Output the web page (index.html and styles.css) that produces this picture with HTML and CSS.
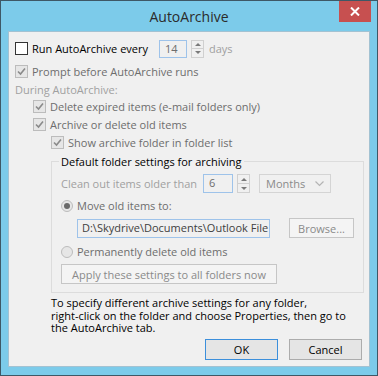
FILE: index.html
```html
<!DOCTYPE html>
<html lang="en">
<head>
    <meta charset="UTF-8">
    <title>AutoArchive</title>
    <link rel="stylesheet" href="styles.css">
</head>
<body>
    <div class="window">
        <div class="titlebar">
            <span class="title">AutoArchive</span>
            <span class="close">
                <svg width="10" height="9" viewBox="0 0 10 9"><path d="M1 0.5 L9 8.5 M9 0.5 L1 8.5" stroke="#fff" stroke-width="2"/></svg>
            </span>
        </div>
        <div class="client">
            <div class="row r1">
                <span class="check on"></span>
                <span class="label dark run-label">Run AutoArchive every</span>
                <span class="edit days-edit">14</span>
                <span class="arrows"><span class="up"></span><span class="down"></span></span>
                <span class="label faint days">days</span>
            </div>
            <div class="row r2">
                <span class="check"><svg width="11" height="11" viewBox="0 0 11 11"><path d="M2 5.5 L4.5 8 L9 2.5" fill="none" stroke="#8a8a8a" stroke-width="1.6"/></svg></span>
                <span class="label gray">Prompt before AutoArchive runs</span>
            </div>
            <div class="row r3">
                <span class="label faint">During AutoArchive:</span>
            </div>
            <div class="row r4 indent1">
                <span class="check"><svg width="11" height="11" viewBox="0 0 11 11"><path d="M2 5.5 L4.5 8 L9 2.5" fill="none" stroke="#8a8a8a" stroke-width="1.6"/></svg></span>
                <span class="label gray">Delete expired items (e-mail folders only)</span>
            </div>
            <div class="row r5 indent1">
                <span class="check"><svg width="11" height="11" viewBox="0 0 11 11"><path d="M2 5.5 L4.5 8 L9 2.5" fill="none" stroke="#8a8a8a" stroke-width="1.6"/></svg></span>
                <span class="label gray">Archive or delete old items</span>
            </div>
            <div class="row r6 indent2">
                <span class="check"><svg width="11" height="11" viewBox="0 0 11 11"><path d="M2 5.5 L4.5 8 L9 2.5" fill="none" stroke="#8a8a8a" stroke-width="1.6"/></svg></span>
                <span class="label gray">Show archive folder in folder list</span>
            </div>

            <fieldset class="group">
                <legend>Default folder settings for archiving</legend>
                <div class="row clean-row">
                    <span class="label faint clean-label">Clean out items older than</span>
                    <span class="edit months-edit">6</span>
                    <span class="arrows"><span class="up"></span><span class="down"></span></span>
                    <span class="combo">
                        <span>Months</span>
                        <svg width="9" height="6" viewBox="0 0 9 6"><path d="M0.5 0.5 L4.5 4.5 L8.5 0.5" fill="none" stroke="#b4b4b4" stroke-width="1.2"/></svg>
                    </span>
                </div>
                <div class="row move-row">
                    <span class="radio on"></span>
                    <span class="label gray">Move old items to:</span>
                </div>
                <div class="row path-row">
                    <span class="edit path-edit">D:\Skydrive\Documents\Outlook File</span>
                    <span class="btn browse">Browse...</span>
                </div>
                <div class="row perm-row">
                    <span class="radio"></span>
                    <span class="label gray">Permanently delete old items</span>
                </div>
                <div class="btn apply">Apply these settings to all folders now</div>
            </fieldset>

            <p class="help">To specify different archive settings for any folder, <span class="nobr">right-click</span> on the folder and choose Properties, then go to the AutoArchive tab.</p>

            <div class="buttons">
                <span class="btn push ok">OK</span>
                <span class="btn push">Cancel</span>
            </div>
        </div>
    </div>
</body>
</html>
```

FILE: styles.css
```css
* {
    box-sizing: border-box;
}
body {
    margin: 0;
    font-family: "Open Sans", "Noto Sans", sans-serif;
    font-size: 11px;
}
.window {
    width: 378px;
    height: 376px;
    border: 1px solid #3e5866;
    background-color: #7ccbea;
    padding: 0 7px 8px 7px;
    display: flex;
    flex-direction: column;
}
.titlebar {
    height: 30px;
    flex: none;
    display: grid;
    grid-template-columns: 1fr auto 1fr;
    align-items: start;
}
.title {
    grid-column: 2;
    font-size: 14px;
    line-height: 31px;
    color: #2b2b2b;
}
.close {
    grid-column: 3;
    justify-self: end;
    width: 32px;
    height: 21px;
    margin-right: -1px;
    background-color: #c75050;
    display: flex;
    align-items: center;
    justify-content: center;
}
.client {
    flex: 1;
    background-color: #f0f0f0;
    border: 1px solid #a3c2d2;
    padding: 7px 6px 0 6px;
}
.row {
    display: flex;
    align-items: center;
    height: 17px;
    white-space: nowrap;
}
.label {
    margin-left: 4px;
    line-height: 17px;
}
.r3 .label, .clean-label {
    margin-left: 0;
}
.dark {
    color: #000;
}
.gray {
    color: #6d6d6d;
}
.faint {
    color: #a0a0a0;
}
.r1 {
    height: 19px;
}
.run-label {
    width: 127px;
    flex: none;
}
.r2 {
    margin-top: 5px;
}
.r3 {
    margin-top: 1px;
}
.r5, .r6 {
    margin-top: 1px;
}
.indent1 {
    padding-left: 18px;
}
.indent2 {
    padding-left: 36px;
}

/* check boxes and radios */
.check {
    width: 13px;
    height: 13px;
    flex: none;
    border: 1px solid #bcbcbc;
    background-color: #e6e6e6;
    display: flex;
    align-items: center;
    justify-content: center;
}
.check.on {
    border-color: #333;
    background-color: #fff;
}
.radio {
    width: 12px;
    height: 12px;
    flex: none;
    border: 1px solid #bcbcbc;
    border-radius: 50%;
    background-color: #e6e6e6;
    display: flex;
    align-items: center;
    justify-content: center;
}
.radio.on::after {
    content: "";
    width: 6px;
    height: 6px;
    border-radius: 50%;
    background-color: #6a6a6a;
}

/* edits, spinners, combo */
.edit {
    height: 18px;
    border: 1px solid #9ec3ea;
    background-color: #f0f0f0;
    color: #6d6d6d;
    padding: 0 5px;
    line-height: 16px;
    overflow: hidden;
    flex: none;
}
.days-edit {
    width: 28px;
}
.arrows {
    width: 13px;
    height: 18px;
    margin-left: 4px;
    display: flex;
    flex-direction: column;
    flex: none;
}
.arrows span {
    flex: 1;
    border: 1px solid #d0d0d0;
    background-color: #f0f0f0;
    display: flex;
    align-items: center;
    justify-content: center;
}
.arrows .down {
    border-top: none;
}
.arrows .up::after {
    content: "";
    border-left: 3px solid transparent;
    border-right: 3px solid transparent;
    border-bottom: 3px solid #7a7a7a;
}
.arrows .down::after {
    content: "";
    border-left: 3px solid transparent;
    border-right: 3px solid transparent;
    border-top: 3px solid #7a7a7a;
}
.days {
    margin-left: 5px;
}

/* group box */
.group {
    margin: 2px -1px 0 36px;
    border: 1px solid #dcdcdc;
    padding: 0 9px 8px 9px;
    min-width: 0;
}
.group legend {
    padding: 0 2px;
    margin-left: -2px;
    line-height: 17px;
    color: #000;
}
.clean-row {
    height: 19px;
    margin-top: 4px;
}
.clean-label {
    width: 142px;
    flex: none;
}
.months-edit {
    width: 30px;
    height: 19px;
}
.clean-row .arrows {
    height: 19px;
}
.combo {
    margin-left: 9px;
    width: 72px;
    height: 19px;
    border: 1px solid #d4d4d4;
    background-color: #f0f0f0;
    color: #8a8a8a;
    padding: 0 6px 0 6px;
    display: flex;
    align-items: center;
    justify-content: space-between;
}
.move-row {
    margin-top: 4px;
}
.path-row {
    height: 20px;
    margin-top: 4px;
    padding-left: 16px;
}
.path-edit {
    width: 193px;
    height: 19px;
    color: #404040;
    padding: 0 4px;
}
.btn {
    border: 1px solid #c6c6c6;
    background-color: #f4f4f4;
    color: #8a8a8a;
    display: flex;
    align-items: center;
    justify-content: center;
    white-space: nowrap;
}
.browse {
    margin-left: 19px;
    width: 65px;
    height: 20px;
}
.perm-row {
    margin-top: 5px;
}
.apply {
    margin-top: 4px;
    width: 216px;
    height: 20px;
}

.help {
    margin: 4px 0 0 36px;
    line-height: 12.5px;
    color: #000;
    width: 296px;
}
.nobr {
    white-space: nowrap;
}
.buttons {
    margin-top: 4px;
    display: flex;
    justify-content: flex-end;
    gap: 11px;
    padding-right: 1px;
}
.push {
    width: 73px;
    height: 21px;
    border-color: #acacac;
    background-color: #e5e5e5;
    color: #000;
}
.push.ok {
    border-color: #3c8fdb;
}
```
